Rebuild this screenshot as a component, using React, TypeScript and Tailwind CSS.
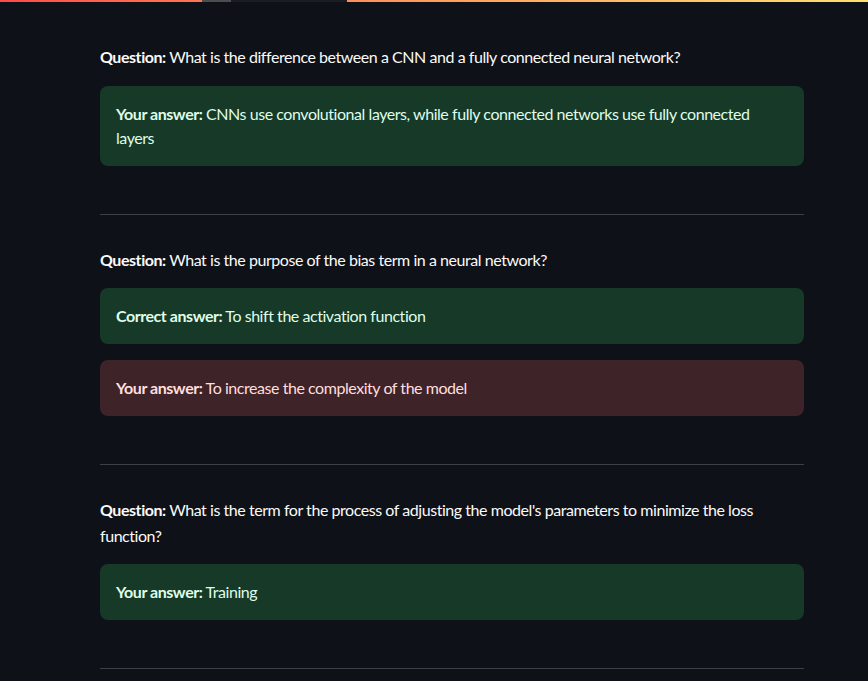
import React from "react";

function Question({ children }: { children: React.ReactNode }) {
  return (
    <p className="text-[16px] leading-[1.6] text-[#fafafa]">
      <strong className="font-bold">Question:</strong> {children}
    </p>
  );
}

function Success({ label, children }: { label: string; children: React.ReactNode }) {
  return (
    <div className="rounded-lg bg-[#173928] p-4 text-[16px] leading-6 text-[#dffde9]">
      <strong className="font-bold">{label}</strong> {children}
    </div>
  );
}

function ErrorBox({ label, children }: { label: string; children: React.ReactNode }) {
  return (
    <div className="rounded-lg bg-[#3e2328] p-4 text-[16px] leading-6 text-[#ffdede]">
      <strong className="font-bold">{label}</strong> {children}
    </div>
  );
}

function Divider() {
  return <hr className="mt-8 mb-4 border-0 border-t border-[#3d4044]" />;
}

export default function App() {
  return (
    <div
      className="min-h-[681px] bg-[#0e1117] tracking-[-0.45px]"
      style={{ fontFamily: "Lato, 'Noto Sans', sans-serif" }}
    >
      <div className="relative h-[2px] bg-gradient-to-r from-[#ff4b4b] to-[#ffe070]">
        <div className="absolute left-[202px] top-0 flex h-[2px]">
          <div className="w-[29px] bg-[#4d4d4f]" />
          <div className="w-[116px] bg-[#1c1d22]" />
        </div>
      </div>
      <div className="ml-[100px] flex w-[704px] flex-col gap-4 pt-[42px]">
        <Question>What is the difference between a CNN and a fully connected neural network?</Question>
        <Success label="Your answer:">
          CNNs use convolutional layers, while fully connected networks use fully connected layers
        </Success>
        <Divider />
        <Question>What is the purpose of the bias term in a neural network?</Question>
        <Success label="Correct answer:">To shift the activation function</Success>
        <ErrorBox label="Your answer:">To increase the complexity of the model</ErrorBox>
        <Divider />
        <Question>
          What is the term for the process of adjusting the model's parameters to minimize the loss function?
        </Question>
        <Success label="Your answer:">Training</Success>
        <Divider />
      </div>
    </div>
  );
}
